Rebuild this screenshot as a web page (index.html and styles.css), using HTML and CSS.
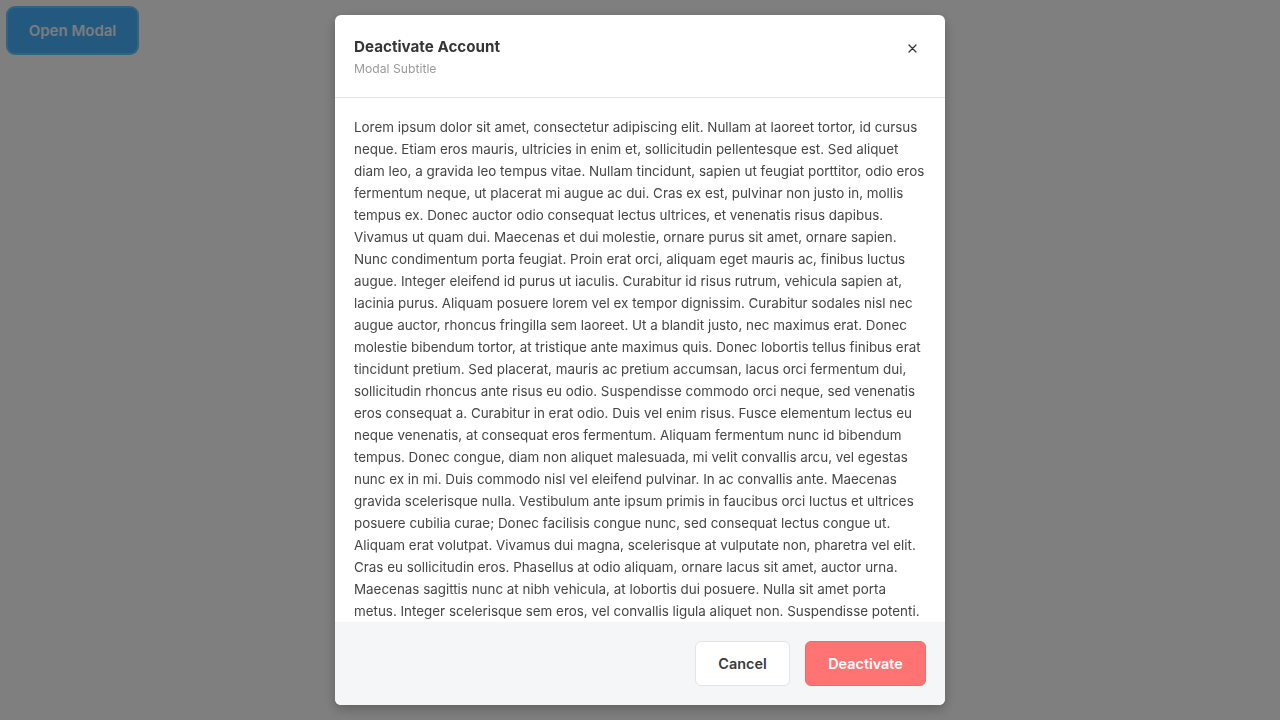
FILE: index.html
```html
<!DOCTYPE html>
<html lang="en">
<head>
<meta charset="utf-8">
<title>Modal</title>
<link rel="stylesheet" href="styles.css">
</head>
<body>
<button class="open-btn" type="button">Open Modal</button>

<div class="overlay">
  <div class="modal" role="dialog" aria-labelledby="modal-title">
    <header class="modal-header">
      <div class="modal-titles">
        <h2 class="modal-title" id="modal-title">Deactivate Account</h2>
        <p class="modal-subtitle">Modal Subtitle</p>
      </div>
      <button class="close-btn" type="button" aria-label="Close">
        <svg width="9" height="9" viewBox="0 0 9 9" aria-hidden="true">
          <path d="M1 1 L8 8 M8 1 L1 8" stroke="#333" stroke-width="1.3" stroke-linecap="round" fill="none"/>
        </svg>
      </button>
    </header>
    <div class="modal-body">
      <p>Lorem ipsum dolor sit amet, consectetur adipiscing elit. Nullam at laoreet tortor, id cursus neque. Etiam eros mauris, ultricies in enim et, sollicitudin pellentesque est. Sed aliquet diam leo, a gravida leo tempus vitae. Nullam tincidunt, sapien ut feugiat porttitor, odio eros fermentum neque, ut placerat mi augue ac dui. Cras ex est, pulvinar non justo in, mollis tempus ex. Donec auctor odio consequat lectus ultrices, et venenatis risus dapibus. Vivamus ut quam dui. Maecenas et dui molestie, ornare purus sit amet, ornare sapien. Nunc condimentum porta feugiat. Proin erat orci, aliquam eget mauris ac, finibus luctus augue. Integer eleifend id purus ut iaculis. Curabitur id risus rutrum, vehicula sapien at, lacinia purus. Aliquam posuere lorem vel ex tempor dignissim. Curabitur sodales nisl nec augue auctor, rhoncus fringilla sem laoreet. Ut a blandit justo, nec maximus erat. Donec molestie bibendum tortor, at tristique ante maximus quis. Donec lobortis tellus finibus erat tincidunt pretium. Sed placerat, mauris ac pretium accumsan, lacus orci fermentum dui, sollicitudin rhoncus ante risus eu odio. Suspendisse commodo orci neque, sed venenatis eros consequat a. Curabitur in erat odio. Duis vel enim risus. Fusce elementum lectus eu neque venenatis, at consequat eros fermentum. Aliquam fermentum nunc id bibendum tempus. Donec congue, diam non aliquet malesuada, mi velit convallis arcu, vel egestas nunc ex in mi. Duis commodo nisl vel eleifend pulvinar. In ac convallis ante. Maecenas gravida scelerisque nulla. Vestibulum ante ipsum primis in faucibus orci luctus et ultrices posuere cubilia curae; Donec facilisis congue nunc, sed consequat lectus congue ut. Aliquam erat volutpat. Vivamus dui magna, scelerisque at vulputate non, pharetra vel elit. Cras eu sollicitudin eros. Phasellus at odio aliquam, ornare lacus sit amet, auctor urna. Maecenas sagittis nunc at nibh vehicula, at lobortis dui posuere. Nulla sit amet porta metus. Integer scelerisque sem eros, vel convallis ligula aliquet non. Suspendisse potenti. Praesent ut ante eu nisl tempus rhoncus. Morbi euismod, nisi sed tincidunt iaculis, ante lorem pellentesque lectus, vel placerat tellus nibh ut velit. Quisque sit amet mauris id nunc consequat sagittis.</p>
    </div>
    <footer class="modal-footer">
      <button class="btn btn-cancel" type="button">Cancel</button>
      <button class="btn btn-danger" type="button">Deactivate</button>
    </footer>
  </div>
</div>
</body>
</html>
```

FILE: styles.css
```css
* {
  box-sizing: border-box;
}

html, body {
  margin: 0;
  padding: 0;
  height: 100%;
}

body {
  background: #ffffff;
  font-family: Inter, "Noto Sans", "Liberation Sans", sans-serif;
  padding: 8px;
}

.open-btn {
  width: 129px;
  height: 45px;
  border: none;
  border-radius: 7px;
  background: #48b2ff;
  color: #f4f8fc;
  font-family: inherit;
  font-size: 15px;
  font-weight: 600;
  box-shadow: 0 0 0 2px #64c8ff;
  cursor: pointer;
}

.overlay {
  position: fixed;
  inset: 0;
  background: rgba(0, 0, 0, 0.5);
  display: flex;
  align-items: center;
  justify-content: center;
}

.modal {
  width: 610px;
  height: 690px;
  background: #ffffff;
  border-radius: 6px;
  box-shadow: 0 4px 12px rgba(0, 0, 0, 0.25);
  display: flex;
  flex-direction: column;
  overflow: hidden;
}

.modal-header {
  display: flex;
  justify-content: space-between;
  align-items: flex-start;
  padding: 21px 21px 20px 19px;
  border-bottom: 1px solid #e4e4e4;
}

.modal-titles {
  padding-top: 1px;
}

.modal-title {
  margin: 0;
  font-size: 15.2px;
  line-height: 20px;
  font-weight: 700;
  color: #363636;
}

.modal-subtitle {
  margin: 4px 0 0;
  font-size: 12.2px;
  line-height: 16px;
  color: #9a9a9a;
}

.close-btn {
  width: 24px;
  height: 24px;
  margin-top: 0;
  padding: 0;
  border: none;
  background: transparent;
  display: flex;
  align-items: center;
  justify-content: center;
  cursor: pointer;
}

.modal-body {
  flex: 1;
  min-height: 0;
  overflow: hidden;
  padding: 18px 19px 0 19px;
}

.modal-body p {
  margin: 0;
  font-size: 13.4px;
  line-height: 22px;
  color: #454545;
}

.modal-footer {
  flex: none;
  height: 83px;
  background: #f5f6f8;
  display: flex;
  justify-content: flex-end;
  align-items: center;
  gap: 15px;
  padding: 0 19px;
}

.btn {
  height: 45px;
  border-radius: 6px;
  font-family: inherit;
  font-size: 14.4px;
  font-weight: 600;
  cursor: pointer;
}

.btn-cancel {
  width: 95px;
  background: #ffffff;
  border: 1px solid #e2e4e8;
  color: #3a3a3a;
}

.btn-danger {
  width: 121px;
  background: #ff7373;
  border: 1px solid #f06a6a;
  color: #ffffff;
}
```
